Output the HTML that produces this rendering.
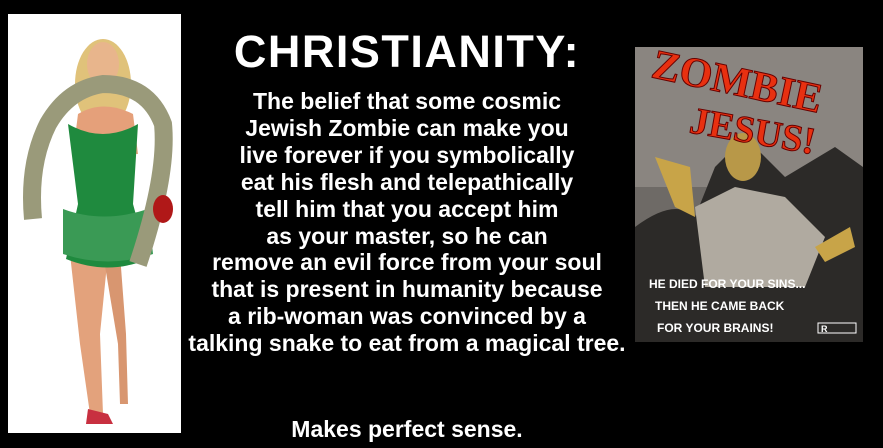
<!DOCTYPE html>
<html><head><style>
html,body{margin:0;padding:0;background:#000;width:883px;height:448px;overflow:hidden;position:relative;font-family:"Liberation Sans",Arial,sans-serif;color:#fff}
.t{position:absolute;left:0;width:814px;text-align:center;font-weight:bold;white-space:nowrap}
#title{top:26px;font-size:45px;line-height:52px;letter-spacing:1.5px}
#body{top:88px;font-size:23px;line-height:26.9px}
#end{top:416px;font-size:23px}
</style></head><body>
<svg style="position:absolute;left:8px;top:14px" width="173" height="419" viewBox="0 0 173 419">
<rect width="173" height="419" fill="#fff"/>
<ellipse cx="95" cy="70" rx="28" ry="45" fill="#e0c27a"/>
<ellipse cx="95" cy="50" rx="16" ry="22" fill="#e8b58c"/>
<path d="M70 100 Q95 85 125 100 L130 140 L65 140 Z" fill="#e5a07a"/>
<path d="M62 240 L72 330 L82 400 L95 400 L92 320 L100 240 Z" fill="#e3a27c"/>
<path d="M95 240 L110 330 L112 390 L120 390 L118 320 L112 240 Z" fill="#d89670"/>
<path d="M60 110 Q95 130 130 110 L125 190 L140 245 Q100 262 58 245 L70 190 Z" fill="#1f8a3e"/>
<path d="M55 195 Q95 210 140 195 L145 240 Q100 255 55 240 Z" fill="#3a9a55"/>
<path d="M25 205 Q20 150 40 110 Q60 75 95 70 Q140 70 155 110 Q160 160 130 250" stroke="#9a9a7a" stroke-width="18" fill="none"/>
<ellipse cx="155" cy="195" rx="10" ry="14" fill="#b01818"/>
<path d="M80 395 L100 400 L105 410 L78 410 Z" fill="#c83040"/>
</svg>
<svg style="position:absolute;left:635px;top:47px" width="228" height="295" viewBox="0 0 228 295">
<rect width="228" height="295" fill="#6e6a66"/>
<rect x="0" y="0" width="228" height="140" fill="#8a8580"/>
<path d="M0 180 Q40 150 60 170 L80 120 L110 90 L150 130 L200 100 L228 120 L228 295 L0 295 Z" fill="#2c2a28"/>
<path d="M60 160 L100 140 L150 150 L190 190 L170 240 L70 240 Z" fill="#b0aaa0"/>
<ellipse cx="108" cy="110" rx="18" ry="24" fill="#b89848"/>
<path d="M20 110 L40 160 L60 170 L55 120 Z" fill="#c8a448"/>
<path d="M180 200 L215 180 L220 200 L190 215 Z" fill="#c8a448"/>
<text x="15" y="50" font-family="Liberation Serif,serif" font-weight="bold" font-size="42" fill="#e83010" stroke="#600" stroke-width="1" transform="rotate(12 110 40)">ZOMBIE</text>
<text x="55" y="95" font-family="Liberation Serif,serif" font-weight="bold" font-size="38" fill="#e83010" stroke="#600" stroke-width="1" transform="rotate(10 110 80)">JESUS!</text>
<text x="14" y="241" font-family="Liberation Sans,sans-serif" font-weight="bold" font-size="12" fill="#fff">HE DIED FOR YOUR SINS...</text>
<text x="20" y="263" font-family="Liberation Sans,sans-serif" font-weight="bold" font-size="12" fill="#fff">THEN HE CAME BACK</text>
<text x="22" y="285" font-family="Liberation Sans,sans-serif" font-weight="bold" font-size="12" fill="#fff">FOR YOUR BRAINS!</text>
<rect x="183" y="276" width="38" height="10" fill="none" stroke="#fff"/>
<text x="186" y="285" font-size="9" font-weight="bold" fill="#fff">R</text>
</svg>
<div class="t" id="title">CHRISTIANITY:</div>
<div class="t" id="body">The belief that some cosmic<br>Jewish Zombie can make you<br>live forever if you symbolically<br>eat his flesh and telepathically<br>tell him that you accept him<br>as your master, so he can<br>remove an evil force from your soul<br>that is present in humanity because<br>a rib-woman was convinced by a<br>talking snake to eat from a magical tree.</div>
<div class="t" id="end">Makes perfect sense.</div>
</body></html>
